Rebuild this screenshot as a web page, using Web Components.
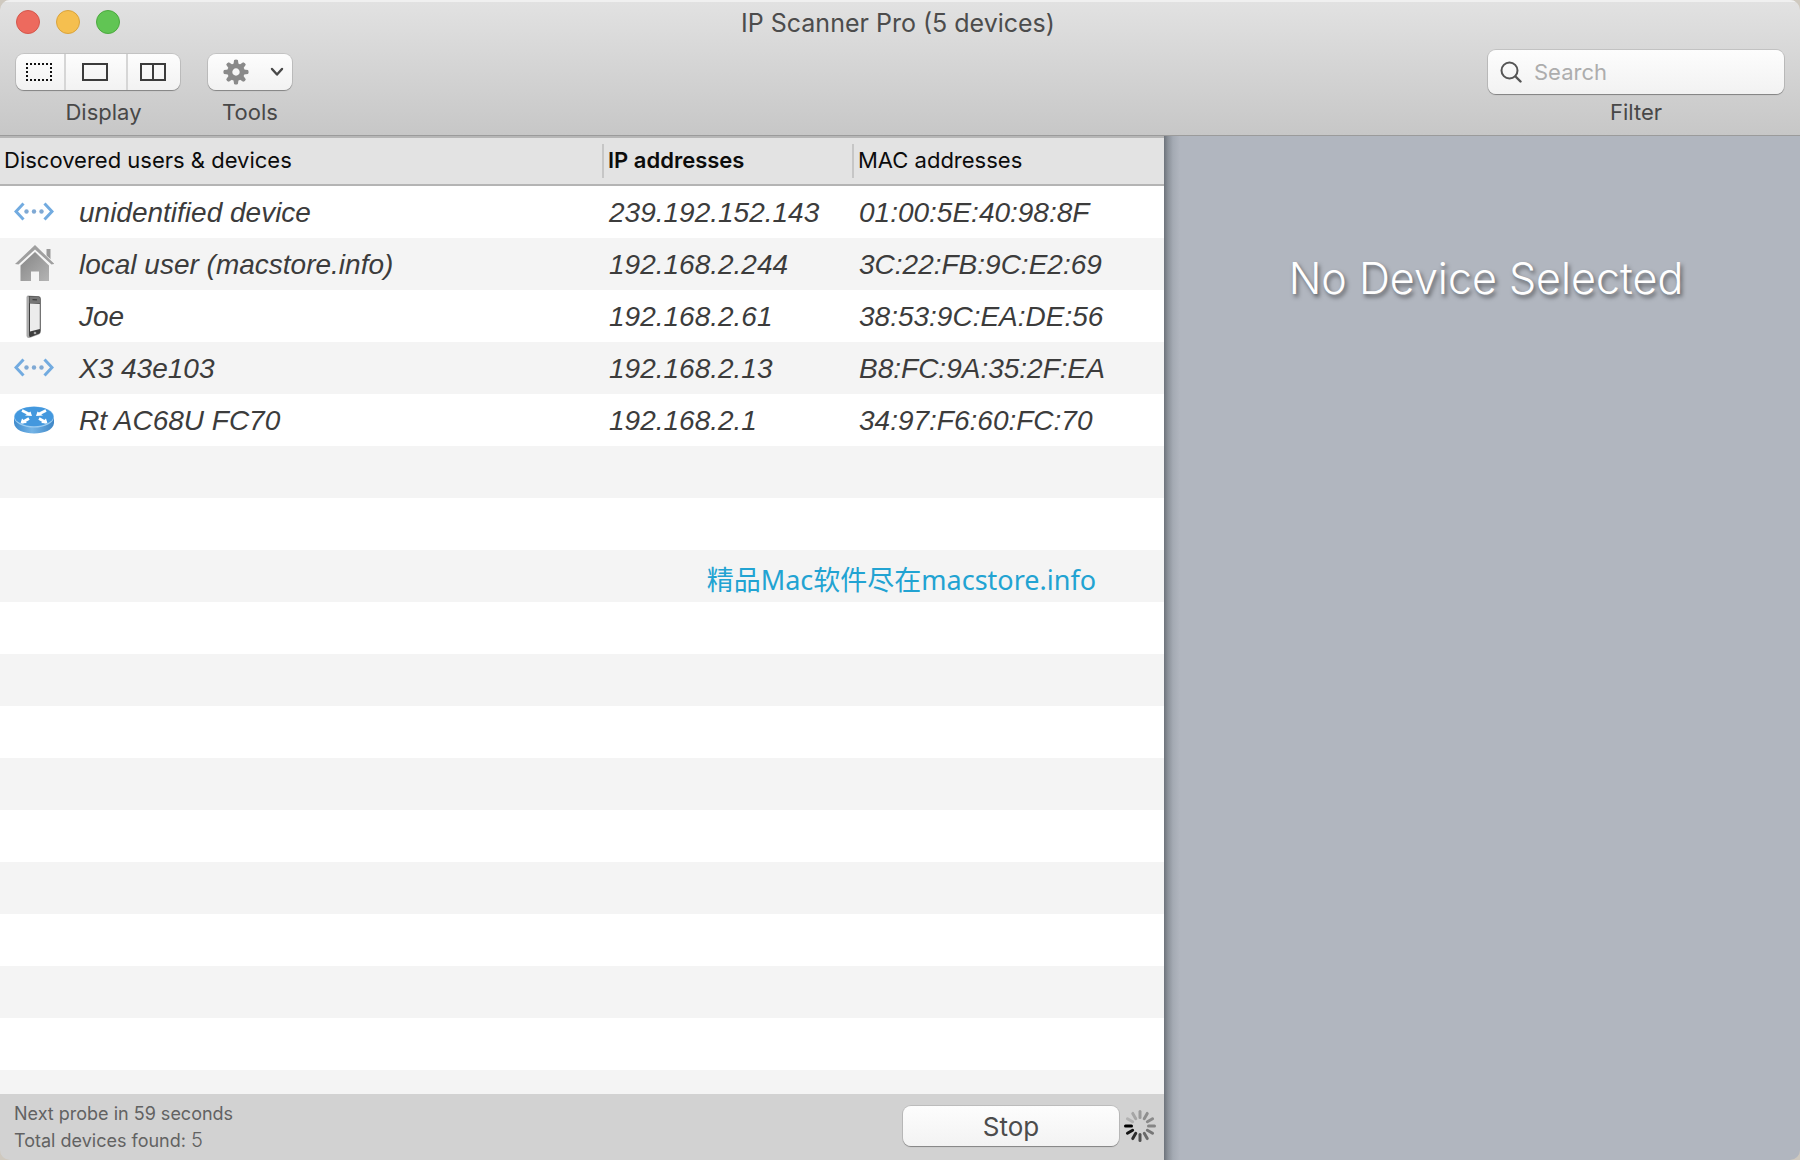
<!DOCTYPE html>
<html lang="en">
<head>
<meta charset="utf-8">
<title>IP Scanner Pro (5 devices)</title>
<style>
  html, body { height: 100%; }
  body {
    margin: 0;
    background: #cfc9bf;
    font-family: Inter, "Liberation Sans", sans-serif;
    color: #444;
  }
</style>
</head>
<body>
<scanner-window></scanner-window>

<template id="device-icons">
  <svg data-name="unknown" viewBox="0 0 40 44" width="40" height="44">
    <g fill="none" stroke="#72abe0" stroke-width="3">
      <path d="M9.5 12.5 2 20.5 9.5 28.5"/><path d="M30.5 12.5 38 20.5 30.5 28.5"/>
    </g>
    <g fill="#7fa9d4"><circle cx="12.500" cy="20.5" r="2.200"/><circle cx="20" cy="20.5" r="2.200"/><circle cx="27.500" cy="20.5" r="2.200"/></g>
  </svg>
  <svg data-name="house" viewBox="0 0 40 44" width="40" height="44">
    <defs><linearGradient id="wall" x1="0" y1="0" x2="1" y2="1"><stop offset="0" stop-color="#858585"/><stop offset="1" stop-color="#b4b4b4"/></linearGradient></defs>
    <path d="M32.5 6h4v11l-4-4z" fill="#999"/>
    <path d="M21 9 35 22.500V38H25V28.500H17V38H6.500V22.500z" fill="url(#wall)"/>
    <path d="M2.500 21.500 21 5 39.500 21.500" fill="none" stroke="#f8f8f8" stroke-width="4"/>
    <path d="M1 21 21 2 40.500 21 37.500 21.500 21 6.500 4.500 21.500z" fill="#9f9f9f"/>
  </svg>
  <svg data-name="phone" viewBox="0 0 40 44" width="40" height="44">
    <path d="M14 .5 25 1.200Q27 1.500 27 4V36Q27 38.500 25 39.500L15.500 43Q13 43.500 12.500 41V2.500Q12.500 .5 14 .5z" fill="#aaa"/>
    <path d="M14.500 1 25 1.600Q26.500 2 26.500 4V35.500Q26.500 38 25 38.800L16.500 42Q15 42.500 15 40V3Q15 1.500 14.500 1z" fill="#3e3e3e"/>
    <path d="M15.500 1.500 25 1.800Q26.500 2 26.300 8.500L15.600 8.200z" fill="#777"/>
    <path d="M16 8.600 25.800 9V34L16 36.500z" fill="#ececec"/>
    <circle cx="21" cy="38" r="1.300" fill="#aaa"/>
    <path d="M18.500 4.700 23 4.900" stroke="#333" stroke-width="1"/>
  </svg>
  <svg data-name="router" viewBox="0 0 40 44" width="40" height="44">
    <defs><linearGradient id="side" x1="0" x2="1"><stop offset="0" stop-color="#3f8bcd"/><stop offset=".45" stop-color="#74b4e6"/><stop offset="1" stop-color="#3e86c6"/></linearGradient></defs>
    <path d="M0 18V24C1 38 39 38 40 24V18z" fill="url(#side)"/>
    <ellipse cx="20" cy="18" rx="20" ry="10.500" fill="#9bcbf0"/>
    <ellipse cx="20" cy="17.500" rx="19.300" ry="9.700" fill="#4398de"/>
    <g stroke="#fff" stroke-width="2.600" fill="#fff">
      <path d="M8 11.500 15 15M32 11.500 25 15M8 23.500 15 19.500M32 23.500 25 19.500"/>
      <path d="M18 17 11 16.500 16.500 12.500zM22 17 29 16.500 23.500 12.500zM6.500 24.500 8 19.500 13 24zM33.500 24.500 32 19.500 27 24z" stroke="none"/>
    </g>
  </svg>
</template>

<script>
class ShadowElement extends HTMLElement {
  constructor() {
    super();
    this.attachShadow({ mode: "open" }).innerHTML = this.markup();
  }
}

customElements.define("window-controls", class extends ShadowElement {
  markup() {
    return `<style>
      :host { display: flex; gap: 16px; }
      button { width: 24px; height: 24px; padding: 0; border: 1px solid; border-radius: 50%; }
      .close { background: #ed6a5e; border-color: #d4574c; }
      .minimize { background: #f5bf4f; border-color: #d9a33c; }
      .zoom { background: #61c554; border-color: #4ca93f; }
    </style>
    <button class="close" aria-label="Close"></button>
    <button class="minimize" aria-label="Minimize"></button>
    <button class="zoom" aria-label="Zoom"></button>`;
  }
});

customElements.define("toolbar-item", class extends ShadowElement {
  markup() {
    return `<style>
      :host { display: flex; flex-direction: column; }
      .control { height: 44px; display: flex; align-items: center; }
      .caption { line-height: 37px; font-size: 22px; text-align: center; color: #484848; }
    </style>
    <div class="control"><slot></slot></div>
    <div class="caption"><slot name="caption"></slot></div>`;
  }
});

customElements.define("display-switch", class extends ShadowElement {
  markup() {
    return `<style>
      :host { display: flex; border-radius: 8px; overflow: hidden; background: linear-gradient(#fdfdfd, #f2f2f2);
        box-shadow: 0 0 0 1px rgba(0,0,0,.09), 0 1px 1px rgba(0,0,0,.3); }
      button { box-sizing: border-box; height: 36px; padding: 0 3px 0 0; border: 0; background: none;
        display: flex; align-items: center; justify-content: center; width: 54px; }
      button + button { border-left: 2px solid #d6d6d6; }
      .compact { width: 48px; } .single { width: 62px; }
      svg { display: block; fill: none; stroke: #3c3c3c; stroke-width: 2; }
    </style>
    <button class="compact" aria-label="Compact"><svg width="26" height="18"><path stroke="#111" stroke-dasharray="2 2" d="M0 1H26M0 17H26"/><path stroke="#111" stroke-dasharray="2 2" d="M1 0V18M25 0V18"/></svg></button>
    <button class="single" aria-label="Single"><svg width="26" height="18"><path d="M1 1H25V17H1z"/></svg></button>
    <button aria-label="Split"><svg width="26" height="18"><path d="M1 1H25V17H1zM13 1V17"/></svg></button>`;
  }
});

customElements.define("tools-menu", class extends ShadowElement {
  markup() {
    const teeth = [0, 45, 90, 135, 180, 225, 270, 315]
      .map(a => `<path d="M-2.600 -7.500 -1.900 -12Q0 -13.200 1.900 -12L2.600 -7.500z" transform="rotate(${a})"/>`).join("");
    return `<style>
      :host { display: block; }
      button { width: 84px; height: 36px; padding: 0 8px 0 15px; border: 0; border-radius: 8px;
        display: flex; align-items: center; justify-content: space-between;
        background: linear-gradient(#fdfdfd, #f2f2f2);
        box-shadow: 0 0 0 1px rgba(0,0,0,.09), 0 1px 1px rgba(0,0,0,.3); }
    </style>
    <button aria-label="Tools" aria-haspopup="menu">
      <svg width="26" height="26" viewBox="-13 -13 26 26" fill="#8a8a8a">${teeth}<circle r="6.200" fill="none" stroke="#8a8a8a" stroke-width="5"/></svg>
      <svg width="14" height="10" fill="none" stroke="#484848" stroke-width="2.400" stroke-linecap="round" stroke-linejoin="round"><path d="M2 2 7 7.500 12 2"/></svg>
    </button>`;
  }
});

customElements.define("filter-field", class extends ShadowElement {
  markup() {
    return `<style>
      :host { display: flex; flex-direction: column; width: 296px; }
      .box { height: 44px; display: flex; align-items: center; gap: 12px; padding-left: 12px; box-sizing: border-box;
        border-radius: 8px; background: linear-gradient(#fdfdfd, #f2f2f2);
        box-shadow: 0 0 0 1px rgba(0,0,0,.1), 0 1px 1px rgba(0,0,0,.3); }
      input { flex: 1; min-width: 0; border: 0; padding: 0; background: none; outline: 0; font: 22px Inter, sans-serif; color: #333; }
      input::placeholder { color: #adadad; opacity: 1; }
      label { line-height: 37px; font-size: 22px; text-align: center; color: #484848; }
      svg { flex: none; }
    </style>
    <div class="box">
      <svg width="22" height="22" fill="none" stroke="#555" stroke-width="2"><circle cx="9.500" cy="9.500" r="8"/><path stroke-width="2.400" stroke-linecap="round" d="M15.500 15.500 20.500 20.500"/></svg>
      <input id="filter" type="search" placeholder="Search">
    </div>
    <label for="filter">Filter</label>`;
  }
});

customElements.define("title-toolbar", class extends ShadowElement {
  markup() {
    return `<style>
      :host { display: block; background: linear-gradient(#e2e2e2, #c7c7c7); border-bottom: 1px solid #9b9b9b;
        box-shadow: inset 0 2px 0 #f0f0f0; }
      .title { display: grid; grid-template-columns: 1fr auto 1fr; align-items: center; height: 44px; padding: 0 20px 0 16px; }
      h1 { margin: 0; padding-top: 2px; font-size: 25px; line-height: 42px; font-weight: 400; color: #4c4c4c; }
      .tools { display: flex; padding: 6px 16px 4px; gap: 17px; }
      .display { width: 175px; }
      filter-field { margin-left: auto; }
    </style>
    <div class="title"><window-controls></window-controls><h1><slot></slot></h1></div>
    <div class="tools">
      <toolbar-item class="display"><display-switch></display-switch><span slot="caption">Display</span></toolbar-item>
      <toolbar-item><tools-menu></tools-menu><span slot="caption">Tools</span></toolbar-item>
      <filter-field></filter-field>
    </div>`;
  }
});

const devices = [
  ["unknown", "unidentified device", "239.192.152.143", "01:00:5E:40:98:8F"],
  ["house", "local user (macstore.info)", "192.168.2.244", "3C:22:FB:9C:E2:69"],
  ["phone", "Joe", "192.168.2.61", "38:53:9C:EA:DE:56"],
  ["unknown", "X3 43e103", "192.168.2.13", "B8:FC:9A:35:2F:EA"],
  ["router", "Rt AC68U FC70", "192.168.2.1", "34:97:F6:60:FC:70"]
];

customElements.define("device-icon", class extends HTMLElement {
  connectedCallback() {
    const root = this.attachShadow({ mode: "open" });
    root.innerHTML = "<style>:host { display: block; width: 40px; height: 44px; } svg { display: block; }</style>";
    const icon = document.getElementById("device-icons").content.querySelector(`[data-name="${this.getAttribute("name")}"]`);
    root.append(icon.cloneNode(true));
  }
});

customElements.define("device-table", class extends ShadowElement {
  markup() {
    const rows = devices.map(([icon, name, ip, mac]) =>
      `<tr><td><div class="device"><device-icon name="${icon}"></device-icon>${name}</div></td><td>${ip}</td><td>${mac}</td></tr>`).join("");
    return `<style>
      :host { display: block; position: relative; overflow: hidden; border-top: 2px solid #b6b6b6;
        background: repeating-linear-gradient(#fff 0 52px, #f4f4f4 52px 104px) 0 48px; }
      table { width: 100%; border-collapse: separate; border-spacing: 0; table-layout: fixed; }
      th { box-sizing: border-box; height: 48px; padding: 0 4px 2px; text-align: left; font-size: 22px; line-height: 28px; font-weight: 400;
        color: #0c0c0c; background: #e3e3e3; border-bottom: 2px solid #b4b4b4; }
      th + th { padding-left: 6px; background: linear-gradient(#c6c6c6, #c6c6c6) left center / 2px 34px no-repeat #e3e3e3; }
      th.sorted { font-weight: 600; }
      td { padding: 2px 0 0 7px; font: italic 28px/50px "Liberation Sans", Arial, sans-serif; color: #3c3c3c; white-space: nowrap; }
      td:first-child { padding-left: 14px; }
      .device { display: flex; align-items: center; gap: 25px; height: 50px; }
      .ip { width: 250px; } .mac { width: 312px; }
      .promo { position: absolute; right: 68px; top: 422px; font: 27px/40px "Noto Sans", "Noto Sans CJK SC", sans-serif; color: #22a3d2; }
    </style>
    <table>
      <thead><tr><th>Discovered users &amp; devices</th><th class="ip sorted">IP addresses</th><th class="mac">MAC addresses</th></tr></thead>
      <tbody>${rows}</tbody>
    </table>
    <div class="promo">精品Mac软件尽在macstore.info</div>`;
  }
});

customElements.define("busy-spinner", class extends ShadowElement {
  markup() {
    const shades = ["#9a9a9a", "#8e8e8e", "#8a8a8a", "#858585", "#777", "#6a6a6a", "#505050", "#2c2c2c", "#141414", "#000", "#b2b2b2", "#a6a6a6"];
    return `<style>:host { display: block; } svg { display: block; }</style>
    <svg width="32" height="32" viewBox="-16 -16 32 32" stroke-width="3" stroke-linecap="round">${
      shades.map((c, i) => `<path d="M0 -8.500V-14.500" stroke="${c}" transform="rotate(${i * 30})"/>`).join("")}</svg>`;
  }
});

customElements.define("status-bar", class extends ShadowElement {
  markup() {
    return `<style>
      :host { display: flex; align-items: center; box-sizing: border-box; height: 66px; padding: 0 8px 2px 14px; background: #d2d2d2; }
      .status { flex: 1; padding-top: 2px; font-size: 18px; line-height: 26px; color: #626262; }
      p { margin: 0; height: 26px; }
      p span { font-weight: 300; font-size: 20px; }
      button { width: 216px; height: 40px; margin-right: 5px; padding: 0; border: 0; border-radius: 8px;
        font: 26px Inter, sans-serif; color: #4c4c4c; background: linear-gradient(#fdfdfd, #f3f3f3);
        box-shadow: 0 0 0 1px rgba(0,0,0,.1), 0 1px 1px rgba(0,0,0,.3); }
    </style>
    <div class="status"><p>Next probe in 59 seconds</p><p>Total devices found: <span>5</span></p></div>
    <button>Stop</button><busy-spinner></busy-spinner>`;
  }
});

customElements.define("device-details", class extends ShadowElement {
  markup() {
    return `<style>
      :host { display: block; box-sizing: border-box; padding: 112px 0 0 8px;
        background: linear-gradient(90deg, #6d737b, #8b9199 4px, #a4aab3 9px, #b1b6bf 16px); }
      h2 { margin: 0; font-size: 43px; line-height: 60px; font-weight: 300; text-align: center; color: #fff;
        text-shadow: 2px 3px 4px rgba(0,0,0,.5); }
    </style>
    <h2><slot></slot></h2>`;
  }
});

customElements.define("scanner-window", class extends ShadowElement {
  markup() {
    return `<style>
      :host { display: flex; flex-direction: column; height: 100vh; border-radius: 10px; overflow: hidden; }
      main { flex: 1; min-height: 0; display: flex; }
      .list { flex: 1; min-width: 0; display: flex; flex-direction: column; }
      device-table { flex: 1; min-height: 0; }
      device-details { width: 636px; }
    </style>
    <title-toolbar>IP Scanner Pro (5 devices)</title-toolbar>
    <main>
      <section class="list"><device-table></device-table><status-bar></status-bar></section>
      <device-details>No Device Selected</device-details>
    </main>`;
  }
});
</script>
</body>
</html>
